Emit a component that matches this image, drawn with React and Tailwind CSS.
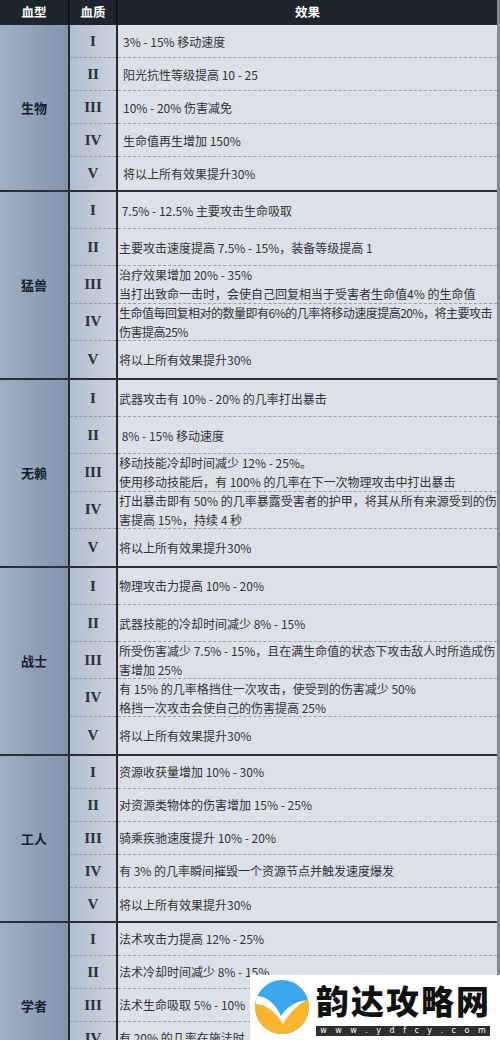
const groups = [
  {
    name: "生物",
    h: "h-[33px]",
    pad: "pl-[5px]",
    rows: [
      ["I", ["3% - 15% 移动速度"]],
      ["II", ["阳光抗性等级提高 10 - 25"]],
      ["III", ["10% - 20% 伤害减免"]],
      ["IV", ["生命值再生增加 150%"]],
      ["V", ["将以上所有效果提升30%"]],
    ],
  },
  {
    name: "猛兽",
    h: "h-[37.2px]",
    pad: "pl-[1px]",
    rows: [
      ["I", [" 7.5% - 12.5% 主要攻击生命吸取"]],
      ["II", ["主要攻击速度提高 7.5% - 15%，装备等级提高 1"]],
      ["III", ["治疗效果增加 20% - 35%", "当打出致命一击时，会使自己回复相当于受害者生命值4% 的生命值"]],
      ["IV", ["生命值每回复相对的数量即有6%的几率将移动速度提高20%，将主要攻击", "伤害提高25%"], true],
      ["V", ["将以上所有效果提升30%"]],
    ],
  },
  {
    name: "无赖",
    h: "h-[37.2px]",
    pad: "pl-[1px]",
    rows: [
      ["I", ["武器攻击有 10% - 20% 的几率打出暴击"]],
      ["II", [" 8% - 15% 移动速度"]],
      ["III", ["移动技能冷却时间减少 12% - 25%。", "使用移动技能后，有 100% 的几率在下一次物理攻击中打出暴击"]],
      ["IV", ["打出暴击即有 50% 的几率暴露受害者的护甲，将其从所有来源受到的伤", "害提高 15%，持续 4 秒"]],
      ["V", ["将以上所有效果提升30%"]],
    ],
  },
  {
    name: "战士",
    h: "h-[37.2px]",
    pad: "pl-[1px]",
    rows: [
      ["I", ["物理攻击力提高 10% - 20%"]],
      ["II", ["武器技能的冷却时间减少 8% - 15%"]],
      ["III", ["所受伤害减少 7.5% - 15%，且在满生命值的状态下攻击敌人时所造成伤", "害增加 25%"]],
      ["IV", ["有 15% 的几率格挡住一次攻击，使受到的伤害减少 50%", "格挡一次攻击会使自己的伤害提高 25%"]],
      ["V", ["将以上所有效果提升30%"]],
    ],
  },
  {
    name: "工人",
    h: "h-[33px]",
    pad: "pl-[1px]",
    rows: [
      ["I", ["资源收获量增加 10% - 30%"]],
      ["II", ["对资源类物体的伤害增加 15% - 25%"]],
      ["III", ["骑乘疾驰速度提升 10% - 20%"]],
      ["IV", ["有 3% 的几率瞬间摧毁一个资源节点并触发速度爆发"]],
      ["V", ["将以上所有效果提升30%"]],
    ],
  },
  {
    name: "学者",
    h: "h-[33px]",
    pad: "pl-[1px]",
    rows: [
      ["I", ["法术攻击力提高 12% - 25%"]],
      ["II", ["法术冷却时间减少 8% - 15%"]],
      ["III", ["法术生命吸取 5% - 10%"]],
      ["IV", ["有 20% 的几率在施法时"]],
      ["V", ["将以上所有效果提升30%"]],
    ],
  },
];

const Logo = () => (
  <svg width="56" height="56" viewBox="0 0 56 56">
    <defs>
      <clipPath id="lc">
        <circle cx="28" cy="28" r="27" />
      </clipPath>
    </defs>
    <g clipPath="url(#lc)">
      <rect width="56" height="56" fill="#3aa8ea" />
      <path d="M0 24 C14 26 24 34 28 40 C34 30 44 24 56 20 L56 56 L0 56 Z" fill="#f9b52c" />
      <path d="M2 17 C14 17 22 26 27 37 C33 28 41 23 52 21 C43 27 35 34 29 45 C22 33 13 26 2 25 Z" fill="#ffffff" />
    </g>
  </svg>
);

const Watermark = () => (
  <div className="absolute left-[250px] top-[975px] w-[250px] h-[65px] bg-white flex items-start">
    <div className="ml-[4px] mt-[4px] shrink-0">
      <Logo />
    </div>
    <div className="ml-[6px] mt-[3px] flex flex-col">
      <div className="text-[33px] leading-[44px] font-black text-[#111] tracking-[2px] font-['Noto_Sans_CJK_SC',sans-serif]">
        韵达攻略网
      </div>
      <div className="mt-[4px] w-[174px] h-[10px] bg-[#2e2e2e] flex justify-around items-center text-white text-[8px] leading-[10px] font-['DejaVu_Sans',sans-serif]">
        {"www.ydfcy.com".split("").map((c, i) => (
          <span key={i}>{c}</span>
        ))}
      </div>
    </div>
  </div>
);

const Group = ({ g, first }) => (
  <div className={`flex ${first ? "" : "border-t-2 border-[#2a2f37]"}`}>
    {/* blood type */}
    <div className="w-[70px] shrink-0 border-r-2 border-[#262b33] bg-gradient-to-r from-[#a0b0c6] to-[#8293ab] flex items-center justify-center text-[13px] font-bold text-[#17202c]">
      {g.name}
    </div>

    {/* quality */}
    <div className="w-[48px] shrink-0 border-r-2 border-[#262b33] bg-gradient-to-r from-[#b2becf] to-[#cbd3df] flex flex-col">
      {g.rows.map(([q], i) => (
        <div
          key={q}
          className={`${g.h} flex items-center justify-center font-['Liberation_Serif',serif] font-bold text-[15px] text-[#2a2f38] ${
            i < 4 ? "border-b border-dashed border-[#939aa5]" : ""
          }`}
        >
          {q}
        </div>
      ))}
    </div>

    {/* effect */}
    <div className="flex-1 min-w-0 bg-[#dde0e6] flex flex-col">
      {g.rows.map(([q, lines, tight], i) => (
        <div
          key={q}
          className={`${g.h} ${g.pad} flex flex-col justify-center overflow-hidden text-[12px] leading-[19px] text-[#30343a] whitespace-pre ${
            tight ? "tracking-[-0.5px]" : ""
          } ${i < 4 ? "border-b border-dashed border-[#9ba1ab]" : ""}`}
        >
          {lines.map((l, j) => (
            <div key={j}>{l}</div>
          ))}
        </div>
      ))}
    </div>
  </div>
);

export default function App() {
  return (
    <div className="relative w-[500px] h-[1040px] overflow-hidden bg-[#dde0e6] font-['Noto_Sans_CJK_SC',sans-serif]">
      <div className="w-[500px] border-r-[3px] border-[#858b94]">
        {/* header */}
        <div className="flex h-[25px] bg-[#1e252f] text-white text-[12.5px] font-bold">
          <div className="w-[70px] shrink-0 border-r-2 border-[#0f1318] flex items-center justify-center">血型</div>
          <div className="w-[48px] shrink-0 border-r-2 border-[#0f1318] flex items-center justify-center">血质</div>
          <div className="flex-1 flex items-center justify-center">效果</div>
        </div>

        {groups.map((g, i) => (
          <Group key={g.name} g={g} first={i === 0} />
        ))}
      </div>

      <Watermark />
    </div>
  );
}
